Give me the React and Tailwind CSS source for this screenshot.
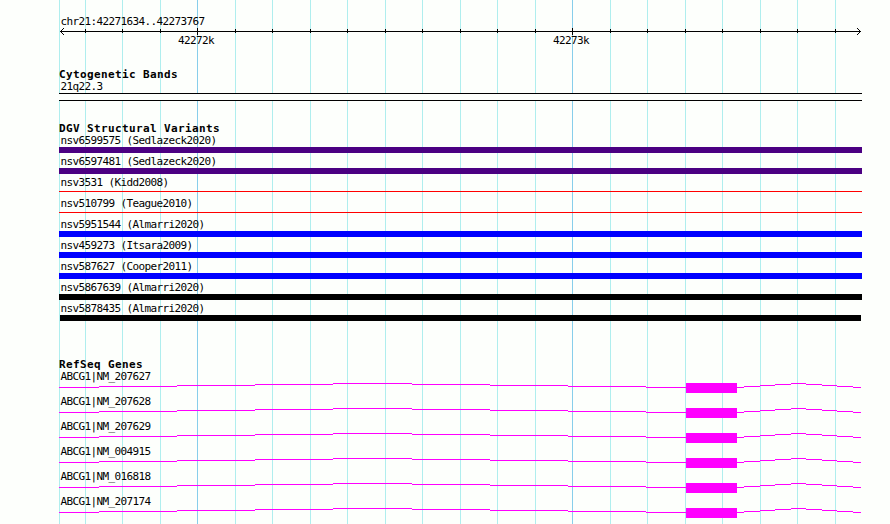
import React from 'react';

const minorLines = [59, 85, 122, 160, 235, 272, 310, 347, 385, 422, 460, 497, 535, 610, 647, 685, 722, 760, 797, 835];
const majorLines = [197, 572];

const variants = [
  { name: 'nsv6599575 (Sedlazeck2020)', bar: 'h-1.5 bg-[#4b0082]' },
  { name: 'nsv6597481 (Sedlazeck2020)', bar: 'h-1.5 bg-[#4b0082]' },
  { name: 'nsv3531 (Kidd2008)', bar: 'mt-0.5 h-px bg-[#ff0000]' },
  { name: 'nsv510799 (Teague2010)', bar: 'mt-0.5 h-px bg-[#ff0000]' },
  { name: 'nsv5951544 (Almarri2020)', bar: 'h-1.5 bg-[#0000ff]' },
  { name: 'nsv459273 (Itsara2009)', bar: 'h-1.5 bg-[#0000ff]' },
  { name: 'nsv587627 (Cooper2011)', bar: 'h-1.5 bg-[#0000ff]' },
  { name: 'nsv5867639 (Almarri2020)', bar: 'h-1.5 bg-black' },
  { name: 'nsv5878435 (Almarri2020)', bar: 'mx-px h-1.5 bg-black' },
];

const genes = ['NM_207627', 'NM_207628', 'NM_207629', 'NM_004915', 'NM_016818', 'NM_207174'];

// [start, end, row] relative to the left edge of the track
const intronSteps = [
  [0, 40, 4], [40, 118, 3], [118, 196, 2], [196, 274, 1], [274, 353, 0],
  [353, 431, 1], [431, 509, 2], [509, 587, 3], [587, 627, 4],
  [678, 685, 4], [685, 701, 3], [701, 716, 2], [716, 732, 1], [732, 747, 0],
  [747, 763, 1], [763, 778, 2], [778, 794, 3], [794, 802, 4],
];

function GridLines() {
  return (
    <svg className="absolute inset-0" width="890" height="524" shapeRendering="crispEdges">
      {minorLines.map(x => <rect key={x} x={x} y="0" width="1" height="524" fill="#afeeee" />)}
      {majorLines.map(x => <rect key={x} x={x} y="0" width="1" height="524" fill="#87ceeb" />)}
    </svg>
  );
}

function Ruler() {
  return (
    <svg className="block" width="803" height="7" shapeRendering="crispEdges">
      <rect x="1" y="3" width="801" height="1" />
      {minorLines.slice(1).map(x => <rect key={x} x={x - 59} y="1" width="1" height="4" />)}
      {majorLines.map(x => <rect key={x} x={x - 59} y="0" width="1" height="7" />)}
      {[1, 2, 3].map(i => (
        <g key={i}>
          <rect x={1 + i} y={3 - i} width="1" height="1" />
          <rect x={1 + i} y={3 + i} width="1" height="1" />
          <rect x={801 - i} y={3 - i} width="1" height="1" />
          <rect x={801 - i} y={3 + i} width="1" height="1" />
        </g>
      ))}
    </svg>
  );
}

function Title({ children }) {
  return <h2 className="h-3 font-bold tracking-[0.378px]">{children}</h2>;
}

function Label({ children }) {
  return <div className="h-[13px] pl-[1.4px]">{children}</div>;
}

function Gene({ name }) {
  return (
    <div className="h-[25px]">
      <Label>ABCG1|{name}</Label>
      <svg className="block" width="803" height="10" shapeRendering="crispEdges" fill="#ff00ff">
        {intronSteps.map(([start, end, row]) => (
          <rect key={start} x={start} y={row} width={end - start} height="1" />
        ))}
        <rect x="627" y="0" width="51" height="10" />
      </svg>
    </div>
  );
}

function App() {
  return (
    <div className="relative h-[524px] w-[890px] overflow-hidden bg-[#fdfffc]">
      <GridLines />
      <main className="relative ml-[59px] w-[803px] pt-[15px] font-['DejaVu_Sans_Mono',monospace] text-[11px] leading-[13px] tracking-[-0.622px] whitespace-pre text-black">
        <section className="h-[53px]">
          <Label>chr21:42271634..42273767</Label>
          <Ruler />
          <div className="-mt-px flex pl-[119px]">
            <span className="w-[375px]">42272k</span>
            <span>42273k</span>
          </div>
        </section>

        <section className="h-[54px]">
          <Title>Cytogenetic Bands</Title>
          <Label>21q22.3</Label>
          <div className="h-2 border-y border-black bg-[#fdfffc]"></div>
        </section>

        <section className="h-[236px]">
          <Title>DGV Structural Variants</Title>
          {variants.map(variant => (
            <div key={variant.name} className="h-[21px]">
              <Label>{variant.name}</Label>
              <div className={variant.bar}></div>
            </div>
          ))}
        </section>

        <section>
          <Title>RefSeq Genes</Title>
          {genes.map(name => <Gene key={name} name={name} />)}
        </section>
      </main>
    </div>
  );
}

export default App;
